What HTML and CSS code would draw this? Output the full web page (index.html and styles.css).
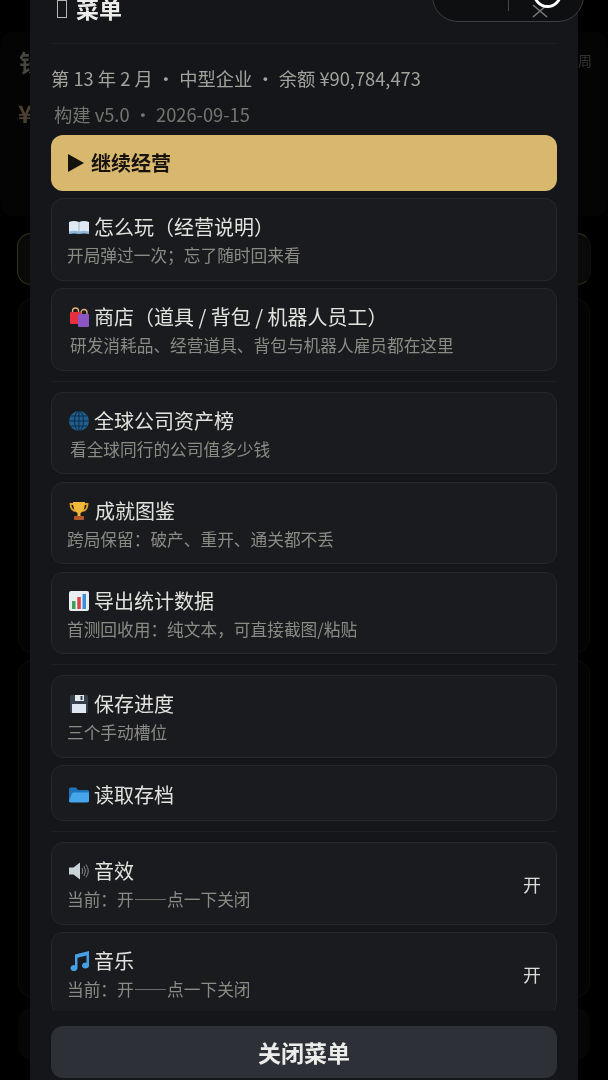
FILE: index.html
```html
<!DOCTYPE html>
<html lang="zh-CN">
<head>
<meta charset="utf-8">
<title>菜单</title>
<link rel="stylesheet" href="styles.css">
</head>
<body>
<div class="backdrop">
  <div class="bg-card bg-top"><span class="bg-money">钱</span><span class="bg-yen">¥</span><span class="bg-week">周</span></div>
  <div class="bg-card bg-gold"></div>
  <div class="bg-card bg-a"></div>
  <div class="bg-card bg-b"></div>
  <div class="bg-card bg-c"></div>
</div>
<main class="panel">
  <header class="head"><span class="tofu"></span><h1 class="title">菜单</h1></header>
  <p class="meta">第 13 年 2 月 ・ 中型企业 ・ 余额 ¥90,784,473</p>
  <p class="build">构建 v5.0 ・ 2026-09-15</p>
  <div class="scroll">
    <button class="primary"><span class="play"></span>继续经营</button>
    <section class="group">
      <div class="item"><div class="item-title"><svg class="ico" viewBox="0 0 20 20"><path fill="#dfe9f2" d="M0 5q5-2 10 0q5-2 10 0v11q-5-1.500-10 0q-5-1.500-10 0z"/><path fill="#8fb9dc" d="M0 14.500q5-1.500 10 0q5-1.500 10 0V17q-5-1-10 0q-5-1-10 0z"/><path stroke="#9fb0c0" d="M10 5v10"/></svg>怎么玩（经营说明）</div><div class="item-sub">开局弹过一次；忘了随时回来看</div></div>
      <div class="item"><div class="item-title"><svg class="ico" viewBox="0 0 20 20"><path fill="none" stroke="#e8b27a" stroke-width="1.300" d="M3.500 6V4a3 3 0 0 1 6 0v2M12 7V5.500a3 3 0 0 1 6 0V7"/><rect fill="#e5303f" y="5" x="1" width="11" height="12" rx="1"/><rect fill="#8c55c4" x="9" y="7" width="11" height="13" rx="1"/></svg>商店（道具 / 背包 / 机器人员工）</div><div class="item-sub shift">研发消耗品、经营道具、背包与机器人雇员都在这里</div></div>
    </section>
    <section class="group">
      <div class="item"><div class="item-title"><svg class="ico" viewBox="0 0 20 20"><circle cx="10" cy="10" r="10" fill="#1f5f8f"/><g fill="none" stroke="#0f2c44" stroke-width="1"><ellipse cx="10" cy="10" rx="4.500" ry="10"/><path d="M10 0v20M0 10h20M1.800 5h16.400M1.800 15h16.400"/></g></svg>全球公司资产榜</div><div class="item-sub shift">看全球同行的公司值多少钱</div></div>
      <div class="item"><div class="item-title"><svg class="ico" viewBox="0 0 20 20"><path fill="none" stroke="#e0a030" stroke-width="1.800" d="M5 3H1.500q0 6 5 7M15 3h3.500q0 6-5 7"/><path fill="#f0b93a" d="M4 1h12q0 9-4.500 11v3h-3v-3Q4 10 4 1z"/><rect fill="#b5562a" x="5" y="15" width="10" height="4" rx="1"/></svg><span class="nudge">成就图鉴</span></div><div class="item-sub">跨局保留：破产、重开、通关都不丢</div></div>
      <div class="item"><div class="item-title"><svg class="ico" viewBox="0 0 20 20"><rect width="20" height="20" rx="2" fill="#e8eef2"/><rect x="3" y="10" width="3.500" height="8" fill="#3aa35a"/><rect x="8.300" y="6" width="3.500" height="12" fill="#d9434e"/><rect x="13.500" y="3" width="3.500" height="15" fill="#3b8fd6"/></svg>导出统计数据</div><div class="item-sub">首测回收用：纯文本，可直接截图/粘贴</div></div>
    </section>
    <section class="group">
      <div class="item"><div class="item-title"><svg class="ico" viewBox="0 0 20 20"><rect x="1" y="1" width="18" height="18" rx="1.500" fill="#36404c"/><rect x="3" y="10" width="14" height="9" fill="#dfe8f2"/><rect x="6" y="1" width="9" height="6" fill="#e6e9ec"/><rect x="11.500" y="2" width="2" height="4" fill="#36404c"/></svg>保存进度</div><div class="item-sub">三个手动槽位</div></div>
      <div class="item short"><div class="item-title"><svg class="ico" viewBox="0 0 20 20"><path fill="#1f74b8" d="M0 4q0-1.500 1.500-1.500H7L9 5h9.500Q20 5 20 6.500V17H1.500Q0 17 0 15.500z"/><path fill="#46a6ea" d="M0 15.500 3 8.500Q3.500 7.500 5 7.500h15V15.500q0 2-2 2H1.500Q0 17.500 0 15.500z"/></svg>读取存档</div></div>
    </section>
    <section class="group last">
      <div class="item toggle"><div><div class="item-title"><svg class="ico" viewBox="0 0 20 20"><path fill="#c9d2d6" d="M0 6.500h4.500L11 1.500v17l-6.500-5H0z"/><path fill="none" stroke="#7f8a90" stroke-width="1" d="M13 7q1.500 3 0 6M15 5q3 5 0 10M17 3.500q4.500 6.500 0 13"/></svg>音效</div><div class="item-sub">当前：开——点一下关闭</div></div><span class="state">开</span></div>
      <div class="item toggle"><div><div class="item-title"><svg class="ico" viewBox="0 0 20 20"><path fill="#46a0e6" d="M6 3.500 20 0v14.500a3.500 3 0 1 1-2.500-2.800V4.500l-9 2.200v10.300a3.500 3 0 1 1-2.500-2.800z"/></svg>音乐</div><div class="item-sub">当前：开——点一下关闭</div></div><span class="state">开</span></div>
    </section>
  </div>
  <footer class="foot"><button class="close">关闭菜单</button></footer>
</main>
<div class="capsule"><span class="cap-line"></span><svg class="cap-x" viewBox="0 0 16 14"><path d="M1 1l14 12M15 1L1 13" stroke="#77797c" stroke-width="1.600" fill="none"/></svg><span class="cap-ring"></span></div>
</body>
</html>
```
FILE: styles.css
```css
* { box-sizing: border-box; }
html, body { margin: 0; height: 1080px; overflow: hidden; background: #000; }
body {
  position: relative;
  font-family: "Noto Sans CJK SC", "Noto Sans", sans-serif;
  color: #e4e4e0;
}
.backdrop { position: absolute; inset: 0; filter: blur(0.5px); }
.bg-card { position: absolute; border-radius: 14px; background: #060606; }
.bg-top { left: 0; right: 0; top: 32px; height: 184px; background: #040404; }
.bg-money { position: absolute; left: 19px; top: 12px; font-size: 24px; font-weight: 700; color: #45463f; }
.bg-yen { position: absolute; left: 18px; top: 63px; font-size: 24px; font-weight: 700; color: #4a4030; }
.bg-week { position: absolute; left: 578px; top: 18px; font-size: 14px; color: #333331; }
.bg-gold { left: 17px; right: 17px; top: 233px; height: 52px; background: #090908; border: 1px solid #36301f; border-right-color: #0e0e0e; }
.bg-a { left: 18px; right: 18px; top: 298px; height: 355px; background: #040404; border: 1px solid #0b0b0b; }
.bg-b { left: 18px; right: 18px; top: 660px; height: 338px; background: #040404; border: 1px solid #0b0b0b; }
.bg-c { left: 18px; right: 18px; top: 1008px; height: 52px; background: #060606; }

.panel {
  position: relative;
  width: 548px;
  height: 1100px;
  margin: -20px 0 0 30px;
  padding: 0 21px;
  background: #14161a;
  display: flex;
  flex-direction: column;
  filter: blur(0.35px);
}
.head {
  height: 64px;
  flex: none;
  display: flex;
  align-items: flex-start;
  gap: 9px;
  padding: 13px 0 0 6px;
  border-bottom: 1px solid #1e2024;
}
.tofu { width: 10px; height: 18px; margin-top: 7px; border: 1px solid #b5b5b2; flex: none; }
.title { margin: 0; font-size: 23px; line-height: 30px; font-weight: 700; color: #ececea; }
.meta { margin: 19px 0 0 0; font-size: 18.300px; line-height: 30px; color: #a3a39e; white-space: nowrap; }
.build { margin: 6px 0 0 3px; font-size: 18.300px; line-height: 30px; color: #75756f; white-space: nowrap; }
.scroll {
  height: 876px;
  flex: none;
  margin-top: 6px;
  overflow: hidden;
  display: flex;
  flex-direction: column;
  gap: 7px;
}
.primary {
  flex: none;
  height: 56px;
  border: 0;
  border-radius: 12px;
  background: #d8b86f;
  color: #17130c;
  font: 700 20px/1 "Noto Sans CJK SC", sans-serif;
  display: flex;
  align-items: center;
  gap: 7px;
  padding: 0 0 0 17px;
  text-align: left;
}
.play { width: 0; height: 0; border-left: 16px solid #15120c; border-top: 9px solid transparent; border-bottom: 9px solid transparent; }
.group {
  flex: none;
  display: flex;
  flex-direction: column;
  gap: 7.500px;
  padding-bottom: 10px;
  margin-bottom: 3px;
  border-bottom: 1px solid #1e2024;
}
.group.last { border-bottom: 0; padding-bottom: 0; margin-bottom: 0; }
.item {
  flex: none;
  height: 82.500px;
  padding: 15px 15px 0;
  background: #191b1e;
  border: 1px solid #25272b;
  border-radius: 12px;
}
.item.short { height: 56px; padding-top: 16px; }
.item.toggle { display: flex; justify-content: space-between; align-items: center; padding-top: 4px; }
.item-title {
  display: flex;
  align-items: center;
  gap: 5px;
  height: 26px;
  font-size: 20px;
  line-height: 26px;
  color: #e2e2de;
  white-space: nowrap;
}
.ico { width: 20px; height: 20px; margin-left: 2px; flex: none; }
.nudge { margin-left: 1px; }
.item-sub { margin: 3px 0 0 0; font-size: 16.700px; line-height: 25px; color: #8b8b86; white-space: nowrap; }
.item-sub.shift { padding-left: 3px; }
.state { margin-bottom: 3px; font-size: 18px; color: #dcdcd8; }
.foot { flex: none; padding-top: 15px; }
.close {
  display: block;
  width: 100%;
  height: 52px;
  border: 0;
  border-radius: 12px;
  background: #2d3037;
  color: #ececea;
  font: 700 23px/1 "Noto Sans CJK SC", sans-serif;
}
.capsule {
  position: absolute;
  left: 432px;
  top: -30px;
  width: 152px;
  height: 52px;
  border: 1px solid #3c3e41;
  border-radius: 26px;
  background: #0e0f11;
  overflow: hidden;
  filter: blur(0.35px);
}
.cap-line { position: absolute; left: 75px; top: 28px; width: 1px; height: 12px; background: #44464a; }
.cap-x { position: absolute; left: 99px; top: 33px; width: 16px; height: 14px; }
.cap-ring { position: absolute; left: 100px; top: 8px; width: 29px; height: 29px; border: 3px solid #fff; border-radius: 50%; }
```
